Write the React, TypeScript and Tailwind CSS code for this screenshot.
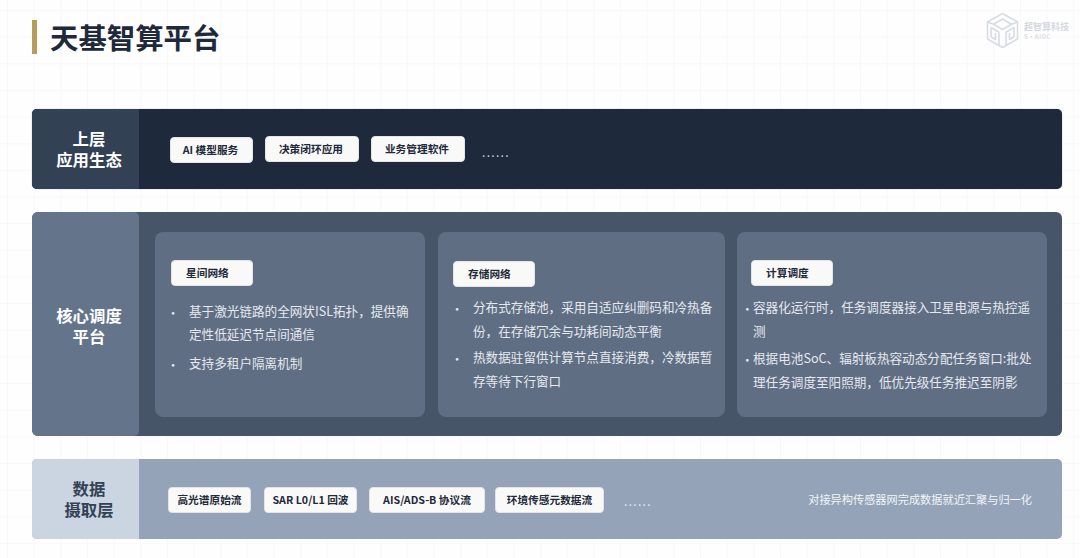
import React from 'react';

const cards = [
    {
        title: '星间网络',
        cardClass: 'w-[270px] pt-[28px] pl-[16px]',
        listClass: 'mt-[13px] pl-[18px] pr-[14px] leading-[23px]',
        bulletClass: 'w-[32px]',
        items: ['基于激光链路的全网状ISL拓扑，提供确定性低延迟节点间通信', '支持多租户隔离机制'],
        gap: 'mt-[6px]',
    },
    {
        title: '存储网络',
        cardClass: 'w-[287px] ml-[13px] pt-[29px] pl-[15px]',
        listClass: 'mt-[8px] pl-[20px] pr-[12px] leading-[24px]',
        bulletClass: 'w-[32px]',
        items: ['分布式存储池，采用自适应纠删码和冷热备份，在存储冗余与功耗间动态平衡', '热数据驻留供计算节点直接消费，冷数据暂存等待下行窗口'],
        gap: 'mt-[2px]',
    },
    {
        title: '计算调度',
        cardClass: 'w-[310px] ml-[12px] pt-[28px] pl-[14px]',
        listClass: 'mt-[9px] pl-[2px] pr-[14px] leading-[24px]',
        bulletClass: 'w-[12px]',
        items: ['容器化运行时，任务调度器接入卫星电源与热控遥测', '根据电池SoC、辐射板热容动态分配任务窗口:批处理任务调度至阳照期，低优先级任务推迟至阴影'],
        gap: 'mt-[3px]',
    },
];

function Chip({ label, className }: { label: string; className: string }) {
    return (
        <div className={`flex h-[26px] items-center rounded-[4px] border border-[#e2e4e8] bg-[#f9f9f7] text-[10.7px] font-bold text-[#1e293b] ${className}`}>
            {label}
        </div>
    );
}

function LayerLabel({ first, second, className }: { first: string; second: string; className: string }) {
    return (
        <div className={`flex w-[107px] shrink-0 items-center justify-center pl-[7px] text-center text-[16.4px] font-bold leading-[21px] ${className}`}>
            <p>
                {first}
                <br />
                {second}
            </p>
        </div>
    );
}

function Logo() {
    return (
        <div className="absolute left-[986px] top-[12px] flex items-center gap-[5px] opacity-90">
            <svg width="33" height="37" viewBox="0 0 33 37" fill="none" stroke="#d5d9e0" strokeWidth="1.6" strokeLinejoin="round">
                <path d="M16.5 1.5 31.5 10v17L16.5 35.5 1.5 27V10Z" />
                <path d="M16.5 7 25.5 12.2 16.5 17.5 7.5 12.2Z" />
                <path d="M1.5 10 7.5 12.2M31.5 10 25.5 12.2" />
                <path d="M5 15.5 13 20.2V33M28 15.5 20 20.2V33" />
                <path d="M5 15.5V25M28 15.5V25M5 25 9.5 27.5V21M28 25 23.5 27.5V21" />
            </svg>
            <div className="flex flex-col text-[#d0d4db]">
                <span className="text-[9px] font-bold leading-[12px]">超智算科技</span>
                <span className="text-[6px] font-medium leading-[8px] tracking-[0.6px]">S·AIDC</span>
            </div>
        </div>
    );
}

export default function App() {
    return (
        <div className="relative h-[558px] w-[1080px] overflow-hidden bg-[#fefefe] bg-[linear-gradient(#f8f8f8_1px,transparent_1px),linear-gradient(90deg,#f8f8f8_1px,transparent_1px)] bg-[size:26.67px_26.67px] bg-[position:7px_10px] pl-[32px] pt-[20px] font-['Noto_Sans_CJK_SC','Noto_Sans',sans-serif]">
            <div className="flex h-[34px] items-center">
                <div className="h-[34px] w-[5px] bg-[#b99b5c]" />
                <h1 className="ml-[13px] text-[28.4px] font-bold text-[#1e293b]">天基智算平台</h1>
            </div>
            <Logo />

            <section className="mt-[55px] flex h-[80px] w-[1030px] overflow-hidden rounded-[5px] bg-[#1e293b] shadow-[0_0_1px_#64748b]">
                <LayerLabel first="上层" second="应用生态" className="bg-[#334155] text-white" />
                <div className="flex items-start pl-[31px] pt-[27px]">
                    <Chip label="AI 模型服务" className="mt-[1px] w-[83px] justify-center pr-[2px]" />
                    <Chip label="决策闭环应用" className="ml-[12px] w-[94px] justify-center pr-[2px]" />
                    <Chip label="业务管理软件" className="ml-[12px] w-[94px] justify-center pr-[2px]" />
                    <span className="ml-[17px] mt-[7px] text-[12px] tracking-[1.3px] text-[#cbd5e1]">......</span>
                </div>
            </section>

            <section className="mt-[23px] flex h-[224px] w-[1030px] overflow-hidden rounded-[6px] bg-[#475569]">
                <LayerLabel first="核心调度" second="平台" className="rounded-r-[5px] bg-[#64748b] pt-[3px] text-white" />
                <div className="flex pl-[16px] pt-[20px]">
                    {cards.map((card) => (
                        <div key={card.title} className={`h-[185px] rounded-[8px] bg-[#606e84] ${card.cardClass}`}>
                            <Chip label={card.title} className="w-[82px] pl-[14px]" />
                            <ul className={`text-[12.6px] text-[#e5e9ef] ${card.listClass}`}>
                                {card.items.map((item, i) => (
                                    <li key={item} className={i > 0 ? card.gap : ''}>
                                        <span className="relative">
                                            <span className={`absolute right-full top-0 text-center ${card.bulletClass}`}>•</span>
                                        </span>
                                        {item}
                                    </li>
                                ))}
                            </ul>
                        </div>
                    ))}
                </div>
            </section>

            <section className="mt-[23px] flex h-[80px] w-[1030px] overflow-hidden rounded-[5px] bg-[#94a3b8]">
                <LayerLabel first="数据" second="摄取层" className="bg-[#cbd5e1] text-[#334155]" />
                <div className="flex flex-1 items-start pl-[29px] pt-[28px]">
                    <Chip label="高光谱原始流" className="w-[83px] justify-center" />
                    <Chip label="SAR L0/L1 回波" className="ml-[13px] w-[93px] justify-center" />
                    <Chip label="AIS/ADS-B 协议流" className="ml-[12px] w-[116px] justify-center" />
                    <Chip label="环境传感元数据流" className="ml-[10px] w-[109px] justify-center" />
                    <span className="ml-[20px] mt-[5px] text-[12px] tracking-[1.3px] text-[#e2e8f0]">......</span>
                    <span className="ml-auto mr-[30px] mt-[4px] text-[11.2px] text-[#f1f5f9]">对接异构传感器网完成数据就近汇聚与归一化</span>
                </div>
            </section>
        </div>
    );
}
